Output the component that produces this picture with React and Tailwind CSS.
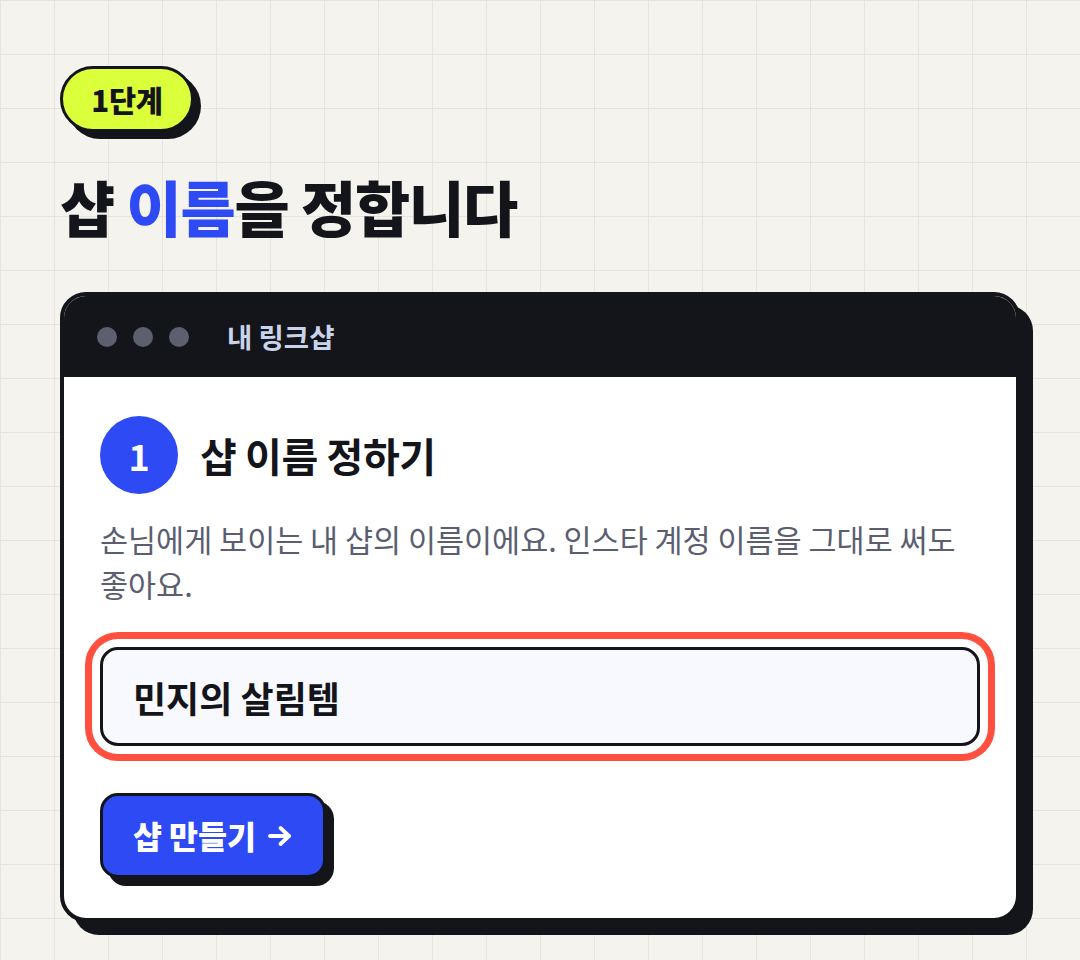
import React from "react";

function Arrow() {
  return (
    <svg width="26" height="22" viewBox="0 0 26 22" fill="none" stroke="currentColor" strokeWidth="3.8" strokeLinecap="round" strokeLinejoin="round" aria-hidden="true">
      <path d="M3 11h19" />
      <path d="M13.5 3l8.5 8-8.5 8" />
    </svg>
  );
}

export default function App() {
  const font = { fontFamily: '"Noto Sans CJK KR", "Noto Sans", sans-serif' };
  return (
    <div
      className="min-h-[960px] w-full bg-[#f4f3ee] bg-[linear-gradient(#e6e4dd_1px,transparent_1px),linear-gradient(90deg,#e6e4dd_1px,transparent_1px)] bg-[size:54px_54px] px-[60px] pt-[66px] pb-[40px] text-[#14151a]"
      style={font}
    >
      <div className="inline-flex h-[66px] w-[134px] items-center justify-center rounded-full border-[3px] border-[#14151a] bg-[#dcff3c] text-[29.5px] font-extrabold tracking-[-0.01em] shadow-[7px_7px_0_#14151a]">
        1단계
      </div>

      <h1 className="mt-[38px] text-[60px] font-black leading-[72px] tracking-[-0.02em]">
        샵 <span className="text-[#2d4af5]">이름</span>을 정합니다
      </h1>

      <div className="mt-[50px] w-[960px] overflow-hidden rounded-[26px] border-[4px] border-[#14151a] bg-white shadow-[13px_13px_0_#14151a]">
        <div className="flex h-[81px] items-center bg-[#14151a] pl-[33px]">
          <div className="flex gap-[16px]">
            <span className="h-[20px] w-[20px] rounded-full bg-[#5b5f6e]" />
            <span className="h-[20px] w-[20px] rounded-full bg-[#5b5f6e]" />
            <span className="h-[20px] w-[20px] rounded-full bg-[#5b5f6e]" />
          </div>
          <span className="ml-[38px] text-[27.5px] font-bold text-[#c9d3ea]">내 링크샵</span>
        </div>

        <div className="px-[36px] pt-[39px] pb-[40px]">
          <div className="flex items-center gap-[22px]">
            <div className="flex h-[78px] w-[78px] items-center justify-center rounded-full bg-[#2d4af5] text-[36px] font-bold text-white">
              1
            </div>
            <h2 className="text-[40px] font-bold tracking-[-0.01em]">샵 이름 정하기</h2>
          </div>

          <p className="mt-[23px] text-[30.5px] leading-[45px] text-[#5a5e70]">
            손님에게 보이는 내 샵의 이름이에요. 인스타 계정 이름을 그대로 써도 좋아요.
          </p>

          <div className="mt-[40px] flex h-[99px] items-center rounded-[18px] border-[3px] border-[#14151a] bg-[#f8f9fe] px-[30px] shadow-[0_0_0_8px_#ffffff,0_0_0_15px_#ff503f]">
            <span className="text-[36px] font-bold">민지의 살림템</span>
          </div>

          <button className="mt-[47px] flex h-[85px] w-[226px] items-center justify-center gap-[11px] rounded-[18px] border-[3px] border-[#14151a] bg-[#2d4af5] text-[31.5px] font-extrabold text-white shadow-[8px_8px_0_#14151a]">
            <span>샵 만들기</span>
            <Arrow />
          </button>
        </div>
      </div>
    </div>
  );
}
